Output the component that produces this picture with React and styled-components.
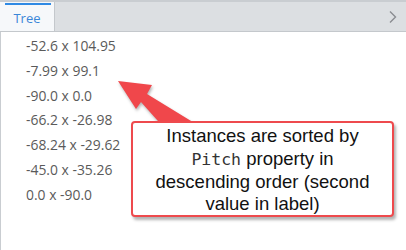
import styled, { createGlobalStyle } from 'styled-components';

const GlobalStyle = createGlobalStyle`
  html, body {
    margin: 0;
    padding: 0;
    background: #ffffff;
  }
  #root {
    width: 406px;
    height: 250px;
  }
`;

const Panel = styled.div`
  position: relative;
  width: 406px;
  height: 250px;
  display: flex;
  flex-direction: column;
  border-top: 2px solid #c9cdd1;
  box-sizing: border-box;
  overflow: hidden;
  font-family: 'Open Sans', sans-serif;
`;

const TabBar = styled.div`
  display: flex;
  align-items: stretch;
  height: 29px;
  background: #dcdfe2;
  border-bottom: 1px solid #c4c8cc;
`;

const Tab = styled.div`
  position: relative;
  width: 54px;
  display: flex;
  align-items: center;
  justify-content: center;
  background: ${props => (props.active ? '#f6f8fa' : 'transparent')};
  border-right: 1px solid #c4c8cc;
  color: #3b87d8;
  font-size: 13px;
  padding-top: 3px;

  &::before {
    content: '';
    display: ${props => (props.active ? 'block' : 'none')};
    position: absolute;
    top: 1px;
    left: 5px;
    right: 3px;
    height: 2px;
    background: #2f8ae4;
  }
`;

const Spacer = styled.div`
  flex: 1;
`;

const Chevron = styled.div`
  width: 26px;
  display: flex;
  align-items: center;
  justify-content: center;
  color: #8a8d91;
`;

const Content = styled.div`
  flex: 1;
  background: #ffffff;
  border-left: 1px solid #c9cdd1;
  padding: 2px 0 0 25px;
  display: flex;
  flex-direction: column;
`;

const Item = styled.div`
  height: 24.8px;
  line-height: 24.8px;
  font-size: 13.9px;
  color: #5a5a5a;
`;

const Callout = styled.div`
  position: absolute;
  left: 131px;
  top: 119px;
  width: 263px;
  height: 96px;
  box-sizing: border-box;
  border: 2px solid #ee4a4d;
  border-radius: 4px;
  background: #ffffff;
  box-shadow: 2px 3px 3px rgba(0, 0, 0, 0.3);
  display: flex;
  align-items: center;
  justify-content: center;
  text-align: center;
  font-family: 'Liberation Sans', Arial, sans-serif;
  font-size: 18.5px;
  line-height: 22.3px;
  color: #111111;
  white-space: nowrap;
  padding-top: 3px;
`;

const Code = styled.span`
  font-family: 'DejaVu Sans Mono', 'Liberation Mono', monospace;
  font-size: 16.5px;
  color: #333333;
`;

const Arrow = styled.svg`
  position: absolute;
  left: 0;
  top: 0;
  pointer-events: none;
  filter: drop-shadow(1px 2px 1.5px rgba(0, 0, 0, 0.3));
`;

const items = [
  '-52.6 x 104.95',
  '-7.99 x 99.1',
  '-90.0 x 0.0',
  '-66.2 x -26.98',
  '-68.24 x -29.62',
  '-45.0 x -35.26',
  '0.0 x -90.0',
];

const App = () => (
  <>
    <GlobalStyle />
    <Panel>
      <TabBar>
        <Tab active>Tree</Tab>
        <Spacer />
        <Chevron>
          <svg width="10" height="14" viewBox="0 0 10 14">
            <path d="M2 1.5 L7.5 7 L2 12.5" fill="none" stroke="currentColor" strokeWidth="1.4" />
          </svg>
        </Chevron>
      </TabBar>
      <Content>
        {items.map(item => (
          <Item key={item}>{item}</Item>
        ))}
      </Content>
      <Arrow width="406" height="250" viewBox="0 0 406 250">
        <polygon
          points="118,79 152,83 147,92 196,122 166,128 141,100 136,107"
          fill="#f0474b"
        />
      </Arrow>
      <Callout>
        <div>
          Instances are sorted by<br />
          <Code>Pitch</Code> property in<br />
          descending order (second<br />
          value in label)
        </div>
      </Callout>
    </Panel>
  </>
);

export default App;
